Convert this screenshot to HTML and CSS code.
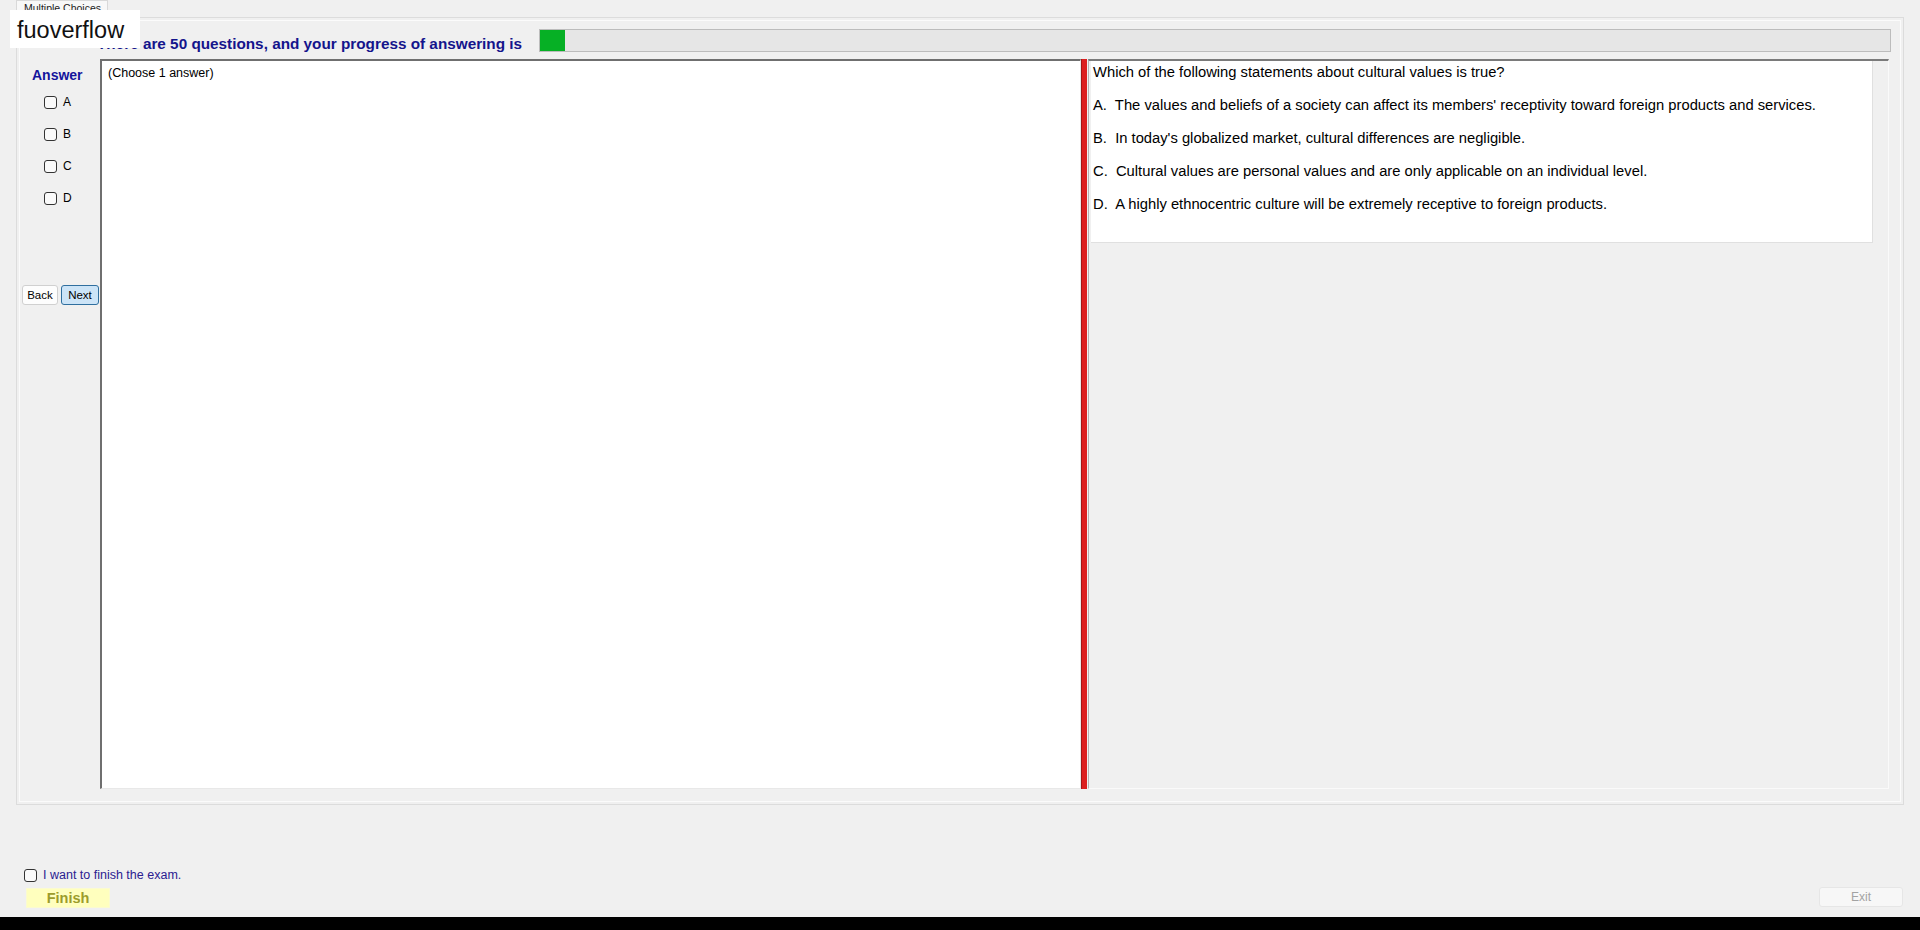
FILE: index.html
```html
<!DOCTYPE html>
<html lang="en">
<head>
  <meta charset="UTF-8" />
  <meta name="viewport" content="width=device-width, initial-scale=1.0" />
  <title>Multiple Choices</title>
  <link rel="stylesheet" href="styles.css">
</head>
<body>
  <div class="app">
    <div class="tabstrip">
      <div class="tab">Multiple Choices</div>
    </div>

    <div class="tab-page">
      <div class="head">
        <div class="title">There are 50 questions, and your progress of answering is</div>
        <div class="progress"><div class="progress-fill" style="width: 25px"></div></div>
      </div>

      <div class="body">
        <div class="answers">
          <div class="answers-label">Answer</div>
          <label class="choice"><input type="checkbox"> A</label>
          <label class="choice"><input type="checkbox"> B</label>
          <label class="choice"><input type="checkbox"> C</label>
          <label class="choice"><input type="checkbox"> D</label>
          <div class="nav-buttons">
            <button class="btn btn-back">Back</button>
            <button class="btn btn-next">Next</button>
          </div>
        </div>

        <div class="answer-box">(Choose 1 answer)</div>
        <div class="splitter"></div>

        <div class="question-pane">
          <div class="question">
            <p>Which of the following statements about cultural values is true?</p>
            <p>A.&nbsp; The values and beliefs of a society can affect its members' receptivity toward foreign products and services.</p>
            <p>B.&nbsp; In today's globalized market, cultural differences are negligible.</p>
            <p>C.&nbsp; Cultural values are personal values and are only applicable on an individual level.</p>
            <p>D.&nbsp; A highly ethnocentric culture will be extremely receptive to foreign products.</p>
          </div>
        </div>
      </div>
    </div>

    <div class="footer">
      <div class="finish-group">
        <label class="finish-check"><input type="checkbox"> I want to finish the exam.</label>
        <button class="btn-finish">Finish</button>
      </div>
      <button class="btn-exit" disabled>Exit</button>
    </div>
  </div>
  <div class="taskbar"></div>

  <div class="watermark">fuoverflow</div>
</body>
</html>
```

FILE: styles.css
```css
body {
  margin: 0;
  width: 1920px;
  height: 930px;
  overflow: hidden;
  background: #f0f0f0;
  font-family: "Liberation Sans", Arial, sans-serif;
  color: #000;
}
.app {
  height: 917px;
  display: flex;
  flex-direction: column;
}
.tabstrip {
  height: 17px;
  padding-left: 16px;
  display: flex;
}
.tab {
  width: 92px;
  box-sizing: border-box;
  border: 1px solid #d9d9d9;
  border-bottom: none;
  background: #f8f8f8;
  font-size: 10.5px;
  padding: 1px 0 0 7px;
  color: #222;
}
.tab-page {
  height: 788px;
  margin: 0 16px;
  box-sizing: border-box;
  border: 1px solid #dcdcdc;
  box-shadow: inset 0 0 0 2px #f0f0f0, inset 0 0 0 3px #fbfbfb;
  padding-bottom: 15px;
  display: flex;
  flex-direction: column;
}
.head {
  height: 41px;
  display: flex;
}
.title {
  width: 442px;
  margin-left: 80px;
  padding-top: 17px;
  font-size: 15.3px;
  line-height: 18px;
  font-weight: bold;
  color: #14148c;
  white-space: nowrap;
}
.progress {
  flex: 1;
  margin: 11px 12px 0 0;
  height: 23px;
  box-sizing: border-box;
  border: 1px solid #bcbcbc;
  background: #e6e6e6;
}
.progress-fill {
  height: 100%;
  background: #06b025;
}
.body {
  height: 730px;
  display: flex;
}
.answers {
  width: 83px;
  display: flex;
  flex-direction: column;
}
.answers-label {
  margin: 8px 0 3px 15px;
  font-size: 14px;
  line-height: 16px;
  font-weight: bold;
  color: #14149c;
}
.choice {
  height: 32px;
  display: flex;
  align-items: center;
  gap: 6px;
  padding-left: 27px;
  font-size: 12px;
}
input[type="checkbox"] {
  appearance: none;
  margin: 0;
  width: 13px;
  height: 13px;
  box-sizing: border-box;
  border: 1px solid #333;
  border-radius: 3px;
  background: #fafafa;
}
.nav-buttons {
  margin: 71px 0 0 5px;
  display: flex;
  gap: 3px;
}
.btn {
  height: 20px;
  padding: 0;
  font-family: inherit;
  font-size: 11.5px;
  border-radius: 3px;
  color: #000;
}
.btn-back {
  width: 36px;
  background: #fdfdfd;
  border: 1px solid #d0d0d0;
}
.btn-next {
  width: 38px;
  background: #cce4f7;
  border: 1px solid #2f6f9f;
}
.answer-box {
  width: 981px;
  box-sizing: border-box;
  background: #fff;
  border-top: 2px solid #6f6f6f;
  border-left: 2px solid #6f6f6f;
  border-right: 1px solid #e8e8e8;
  border-bottom: 1px solid #e8e8e8;
  padding: 4px 6px;
  font-size: 12.5px;
  line-height: 16px;
}
.splitter {
  width: 5px;
  background: #dc1f1f;
  border-left: 1px solid #a51515;
  margin-right: 1px;
}
.question-pane {
  flex: 1;
  margin-right: 14px;
  border-top: 2px solid #7a7a7a;
  border-left: 1px solid #b4b4b4;
  border-bottom: 1px solid #fafafa;
  border-right: 1px solid #fafafa;
  padding-left: 2px;
}
.question {
  width: 782px;
  height: 182px;
  box-sizing: border-box;
  background: #fff;
  border-right: 1px solid #e0e0e0;
  border-bottom: 1px solid #e0e0e0;
  padding: 1px 0 0 2px;
  font-size: 14.75px;
  line-height: 20px;
}
.question p {
  margin: 0 0 13px;
  white-space: nowrap;
}
.footer {
  flex: 1;
  display: flex;
  justify-content: space-between;
  align-items: flex-end;
  padding: 0 17px 9px 24px;
}
.finish-group {
  display: flex;
  flex-direction: column;
  gap: 6px;
}
.finish-check {
  height: 14px;
  display: flex;
  align-items: center;
  gap: 6px;
  font-size: 12.5px;
  color: #2b2090;
}
.btn-finish {
  width: 84px;
  height: 20px;
  margin-left: 2px;
  padding: 0;
  border: 1px solid #fbfbd0;
  background: #ffffbe;
  font-family: inherit;
  font-size: 14.5px;
  font-weight: bold;
  color: #9c9c2c;
}
.btn-exit {
  width: 84px;
  height: 20px;
  margin-bottom: 1px;
  padding: 0;
  border: 1px solid #e6e6e6;
  border-radius: 3px;
  background: #f7f7f7;
  font-family: inherit;
  font-size: 12px;
  color: #a3a3a3;
}
.taskbar {
  height: 13px;
  background: #000;
}
.watermark {
  position: absolute;
  left: 10px;
  top: 10px;
  width: 130px;
  height: 38px;
  box-sizing: border-box;
  padding: 1px 0 0 7px;
  background: #fff;
  font-size: 23.5px;
  line-height: 38px;
  color: #111;
}
```
